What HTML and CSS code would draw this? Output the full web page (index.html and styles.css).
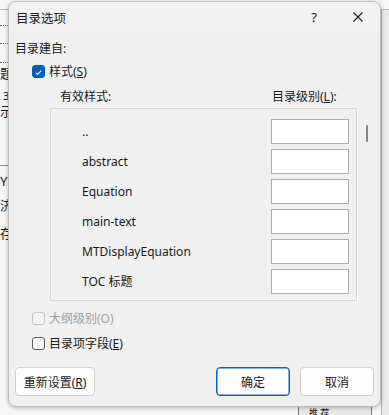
FILE: index.html
```html
<!DOCTYPE html>
<html>
<head>
<meta charset="utf-8">
<link rel="stylesheet" href="styles.css">
</head>
<body>
<div class="desk">
  <!-- document behind the dialog -->
  <div class="backdoc">
    <div class="bg-rule top"></div>
    <div class="dots d1"></div>
    <div class="dots d2"></div>
    <div class="dots d3"></div>
    <span class="frag f1">题</span>
    <span class="frag f2">3</span>
    <span class="frag f3">示</span>
    <div class="bg-rule mid"></div>
    <span class="frag f4">YS</span>
    <span class="frag f5">济</span>
    <span class="frag f6">存(</span>
    <div class="right-pane"></div>
    <div class="back-btn">推 荐</div>
  </div>

  <div class="dialog">
    <div class="titlebar">
      <span class="title">目录选项</span>
      <span class="help">?</span>
      <svg class="close" width="10" height="10" viewBox="0 0 10 10">
        <path d="M0.5 0.5 L9.5 9.5 M9.5 0.5 L0.5 9.5" stroke="#1a1a1a" stroke-width="1.1" fill="none"/>
      </svg>
    </div>
    <div class="content">
      <div class="heading">目录建自:</div>
      <div class="check on">
        <span class="box">
          <svg width="13" height="13" viewBox="0 0 13 13"><path d="M3.3 6.8 L5.4 8.8 L9.7 4.3" stroke="#fff" stroke-width="1.2" fill="none"/></svg>
        </span>
        <span>样式(<u>S</u>)</span>
      </div>
      <div class="cols">
        <span class="col-name">有效样式:</span>
        <span class="col-level">目录级别(<u>L</u>):</span>
      </div>
      <div class="listwrap">
        <div class="list">
          <div class="row"><span>..</span><div class="level"></div></div>
          <div class="row"><span>abstract</span><div class="level"></div></div>
          <div class="row"><span>Equation</span><div class="level"></div></div>
          <div class="row"><span>main-text</span><div class="level"></div></div>
          <div class="row"><span>MTDisplayEquation</span><div class="level"></div></div>
          <div class="row"><span>TOC 标题</span><div class="level"></div></div>
        </div>
        <div class="thumb"></div>
      </div>
      <div class="check disabled outline">
        <span class="box"></span>
        <span>大纲级别(O)</span>
      </div>
      <div class="check field">
        <span class="box"></span>
        <span>目录项字段(<u>E</u>)</span>
      </div>
      <div class="buttons">
        <button class="btn reset">重新设置(<u>R</u>)</button>
        <span class="spacer"></span>
        <button class="btn ok">确定</button>
        <button class="btn">取消</button>
      </div>
    </div>
  </div>
</div>
</body>
</html>
```

FILE: styles.css
```css
* {
  box-sizing: border-box;
}

body {
  margin: 0;
  font: 12px "Noto Sans", "Noto Sans CJK SC", sans-serif;
  color: #1a1a1a;
}

.desk {
  position: relative;
  width: 389px;
  height: 415px;
  overflow: hidden;
  background: #f7f7f7;
}

/* background document */
.bg-rule {
  position: absolute;
  left: 0;
  right: 0;
  height: 1px;
  background: #b9b9b9;
}
.bg-rule.top { top: 9px; }
.bg-rule.mid { top: 165px; background: #8c8c8c; }

.dots {
  position: absolute;
  left: 0;
  width: 8px;
  border-top: 1px dotted #3a6fc4;
}
.d1 { top: 25px; }
.d2 { top: 43px; }
.d3 { top: 62px; }

.frag {
  position: absolute;
  left: 0;
  font-size: 13px;
  line-height: 14px;
}
.f1 { top: 66px; }
.f2 { left: 3px; top: 89px; font-size: 11px; }
.f3 { top: 104px; }
.f4 { top: 174px; }
.f5 { top: 198px; }
.f6 { top: 226px; }

.right-pane {
  position: absolute;
  left: 381px;
  top: 10px;
  width: 8px;
  bottom: 0;
  background: #e9e9e9;
  border-left: 1px solid #b4b4b4;
}

.back-btn {
  position: absolute;
  left: 298px;
  top: 405px;
  width: 74px;
  height: 24px;
  border: 1px solid #7a7a7a;
  background: #e8e8e8;
  padding-top: 2px;
  padding-left: 10px;
  font-size: 9px;
  line-height: 10px;
}

/* dialog window */
.dialog {
  position: absolute;
  left: 8px;
  top: 1px;
  width: 373px;
  height: 406px;
  background: #f0f0f0;
  border: 1px solid #bdbdbd;
  border-radius: 8px;
  box-shadow: 0 1px 4px rgba(0, 0, 0, 0.25);
  overflow: hidden;
  display: flex;
  flex-direction: column;
}

.titlebar {
  height: 30px;
  flex: none;
  display: flex;
  align-items: center;
  background: #f3f2f2;
  padding-left: 7px;
}

.title {
  flex: 1;
  font-size: 12.5px;
}

.help {
  font-size: 13px;
  margin-right: 36px;
}

.close {
  margin-right: 17px;
}

.content {
  flex: 1;
  display: flex;
  flex-direction: column;
  padding: 9px 6px 0 6px;
}

.heading {
  line-height: 16px;
}

.check {
  display: flex;
  align-items: center;
  gap: 4px;
  margin-left: 17px;
  height: 18px;
}

.check .box {
  width: 13px;
  height: 13px;
  border: 1px solid #5d5d5d;
  border-radius: 3px;
  background: #f8f8f8;
  display: flex;
}

.check.on {
  margin-top: 5px;
}
.check.on .box {
  border-color: #005fb8;
  background: #005fb8;
}

.check.disabled {
  color: #a0a0a0;
}
.check.disabled .box {
  border-color: #c6c6c6;
  background: #f4f4f4;
}

.check.outline {
  margin-top: 8px;
}
.check.field {
  margin-top: 7px;
}

.cols {
  display: flex;
  line-height: 16px;
  margin-top: 9px;
  padding-left: 45px;
}

.col-name {
  width: 212px;
}

.listwrap {
  display: flex;
  align-items: flex-start;
  margin-top: 3px;
  margin-left: 35px;
}

.list {
  width: 307px;
  border: 1px solid #d6d6d6;
  box-shadow: 1px 0 0 #ffffff;
  padding: 10px 7px 1px 31px;
}

.row {
  height: 30px;
  display: flex;
  align-items: flex-start;
  justify-content: space-between;
}

.row span {
  line-height: 25px;
}

.level {
  width: 78px;
  height: 25px;
  background: #ffffff;
  border: 1px solid #adadad;
}

.thumb {
  width: 2px;
  height: 17px;
  margin-top: 17px;
  margin-left: 9px;
  border-radius: 1px;
  background: #858585;
}

.buttons {
  display: flex;
  gap: 10px;
  margin-top: 15px;
}

.spacer {
  flex: 1;
}

.btn {
  font: inherit;
  color: #1a1a1a;
  width: 74px;
  height: 29px;
  background: #fdfdfd;
  border: 1px solid #d0d0d0;
  border-radius: 4px;
  padding: 0;
}

.btn.reset {
  width: 80px;
}

.btn.ok {
  border-color: #0067c0;
  box-shadow: inset 0 0 0 0.5px #0067c0;
}
```
